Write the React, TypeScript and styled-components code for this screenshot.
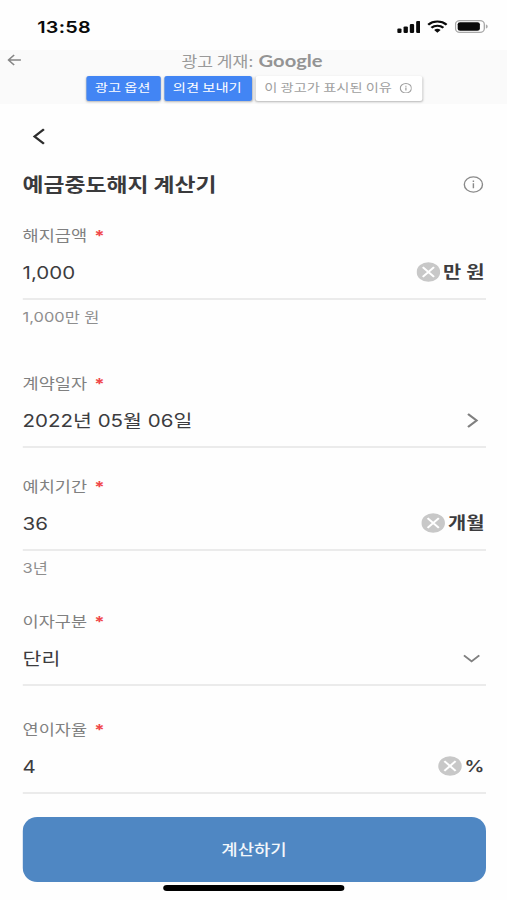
import React from "react";
import styled, { createGlobalStyle } from "styled-components";

const STRETCH = 1.2;

const GlobalStyle = createGlobalStyle`
  * { box-sizing: border-box; }
  html, body { margin: 0; padding: 0; background: #fefefe; overflow: hidden; }
  button { font: inherit; border: 0; padding: 0; background: none; }
`;

const Screen = styled.main`
  width: calc(507px / ${STRETCH});
  height: 900px;
  transform: scaleX(${STRETCH});
  transform-origin: 0 0;
  display: flex;
  flex-direction: column;
  background: #fefefe;
  color: #3c3c3e;
  font-family: "Noto Sans CJK KR", sans-serif;
  white-space: nowrap;
`;

const StatusBar = styled.header`
  height: 50px;
  flex: none;
  display: flex;
  align-items: center;
  justify-content: space-between;
  padding: 3px 15.5px 0 31px;
  color: #0a0a0a;
`;

const Clock = styled.span`
  font: 600 16.5px/20px Inter, sans-serif;
  letter-spacing: 0.2px;
`;

const StatusIcons = styled.div`
  display: flex;
  align-items: center;
  gap: 6px;
  svg { display: block; }
`;

const AdPanel = styled.section`
  height: 54px;
  flex: none;
  display: grid;
  grid-template-columns: 71.7px 1fr;
  background: #fafafa;
  color: #999;
`;

const AdBack = styled.button`
  height: 20px;
  padding-left: 6px;
  display: flex;
  align-items: center;
`;

const AdBody = styled.div`
  display: flex;
  flex-direction: column;
`;

const AdTitle = styled.div`
  height: 26px;
  padding-left: 79.5px;
  display: flex;
  align-items: center;
  gap: 4.5px;
  font-size: 14.3px;
  line-height: 22px;
  padding-bottom: 5px;
`;

const Brand = styled.span`
  font: 700 16.8px/20px Lato, sans-serif;
  color: #949494;
`;

const AdActions = styled.div`
  display: flex;
  gap: 3px;
`;

const AdButton = styled.button<{ $width: number; $plain?: boolean }>`
  width: ${(p) => p.$width}px;
  height: 25px;
  display: flex;
  align-items: center;
  justify-content: center;
  gap: 6px;
  padding: 0 1px 3px 0;
  border-radius: 2px;
  font-size: 11.9px;
  line-height: 20px;
  background: ${(p) => (p.$plain ? "#fff" : "#4285f4")};
  color: ${(p) => (p.$plain ? "#a0a0a0" : "#fff")};
  box-shadow: 0 1px 2px rgba(0, 0, 0, 0.28);
  svg { margin-top: 2px; }
`;

const NavBar = styled.nav`
  height: 64px;
  flex: none;
  padding-left: 27px;
  display: flex;
  align-items: center;
`;

const Content = styled.div`
  flex: 1;
  padding: 0 18px 0 18.8px;
`;

const TitleRow = styled.div`
  height: 55px;
  display: flex;
  align-items: flex-start;
  justify-content: space-between;
  svg { margin: 7.5px 1.5px 0 0; }
`;

const Title = styled.h1`
  margin: 0;
  font-size: 19px;
  line-height: 32px;
  font-weight: 700;
  color: #3a3a3c;
`;

const Field = styled.section<{ $space: number }>`
  height: ${(p) => p.$space}px;
`;

const Label = styled.label`
  display: flex;
  gap: 6px;
  height: 25px;
  font-size: 14.6px;
  line-height: 23px;
  color: #808080;
`;

const Required = styled.span`
  color: #f0484a;
  font: 700 15.5px/28px Inter, sans-serif;
`;

const ValueRow = styled.div`
  height: 52px;
  display: flex;
  align-items: center;
  justify-content: space-between;
  padding-bottom: 2px;
  border-bottom: 2px solid #ebebeb;
`;

const Value = styled.span`
  font-family: Inter, "Noto Sans CJK KR", sans-serif;
  font-size: 17.1px;
  line-height: 28px;
  padding-top: 1px;
`;

const Trailing = styled.span<{ $inset?: number }>`
  display: flex;
  align-items: center;
  gap: 2px;
  padding-right: ${(p) => p.$inset ?? 0.8}px;
`;

const Unit = styled.strong`
  font-family: Inter, "Noto Sans CJK KR", sans-serif;
  font-size: 16.5px;
  line-height: 28px;
  font-weight: 600;
  color: #3c3c3e;
`;

const Helper = styled.p`
  margin: 0;
  font-family: Inter, "Noto Sans CJK KR", sans-serif;
  font-size: 13.7px;
  line-height: 34px;
  color: #8e8e8e;
`;

const Submit = styled.button`
  height: 65px;
  flex: none;
  margin: 0 18px 0 18.8px;
  padding-bottom: 2px;
  border-radius: 12px / 14px;
  background: #4f87c3;
  color: #f3f7fb;
  font-size: 14.8px;
  line-height: 24px;
  font-weight: 500;
`;

const HomeBar = styled.div`
  width: 151px;
  height: 6px;
  flex: none;
  margin: 3px auto 9px;
  border-radius: 3px;
  background: #000;
`;

const Signal = () => (
  <svg width="19.5" height="12" viewBox="0 0 19.5 12" fill="currentColor">
    <rect x="0" y="7.5" width="3.6" height="4.5" rx="1.1" />
    <rect x="5.3" y="5.5" width="3.6" height="6.5" rx="1.1" />
    <rect x="10.5" y="3" width="3.6" height="9" rx="1.1" />
    <rect x="15.8" y="0" width="3.6" height="12" rx="1.1" />
  </svg>
);

const Wifi = () => (
  <svg width="17" height="13" viewBox="0 0 17 13" fill="none" stroke="currentColor" strokeWidth="2.1">
    <path d="M.8 4.7a11 11 0 0 1 15.4 0M3.5 7.7a7.2 7.2 0 0 1 10 0" />
    <path d="M5.8 9.9a4 4 0 0 1 5.4 0L8.5 12.7Z" fill="currentColor" stroke="none" />
  </svg>
);

const Battery = () => (
  <svg width="28" height="13" viewBox="0 0 28 13">
    <rect x=".6" y=".6" width="24" height="11.8" rx="3.6" fill="none" stroke="#a9a9a9" strokeWidth="1.1" />
    <rect x="2.4" y="2.2" width="18.5" height="8.6" rx="2" fill="currentColor" />
    <path d="M25.9 4.5c2 .6 2 3.4 0 4Z" fill="#a9a9a9" />
  </svg>
);

const ArrowLeft = () => (
  <svg width="12" height="12" viewBox="0 0 12 12" fill="none" stroke="#858585" strokeWidth="1.3">
    <path d="M11.4 6H1M5.8 1 1 6l4.8 5" />
  </svg>
);

const Info = ({ size, color }: { size: number; color: string }) => (
  <svg width={size} height={size} viewBox="0 0 17 17" fill="none" stroke={color} strokeWidth={size < 12 ? 1.7 : 1.2}>
    <circle cx="8.5" cy="8.5" r="7.6" />
    <path d="M8.5 7.3v5M8.5 4.4v1.5" />
  </svg>
);

const ChevronLeft = () => (
  <svg width="12" height="17" viewBox="0 0 12 17" fill="none" stroke="#2d2d2d" strokeWidth="2.1">
    <path d="M9.6 1.2 1.8 8.5l7.8 7.3" />
  </svg>
);

const ChevronRight = () => (
  <svg width="10" height="15" viewBox="0 0 10 15" fill="none" stroke="#808080" strokeWidth="1.9">
    <path d="m1 1 7.2 6.5L1 14" />
  </svg>
);

const ChevronDown = () => (
  <svg width="14" height="9" viewBox="0 0 14 9" fill="none" stroke="#808080" strokeWidth="1.7">
    <path d="m.6 1.3 6.4 6 6.4-6" />
  </svg>
);

const Clear = () => (
  <svg width="20" height="20" viewBox="0 0 20 20">
    <circle cx="10" cy="10" r="9.8" fill="#c8c8c8" />
    <path d="m5.3 5.1 9.4 9.8m0-9.8-9.4 9.8" stroke="#fff" strokeWidth="1.8" />
  </svg>
);

interface FieldItem {
  label: string;
  value: string;
  unit?: string;
  icon?: "next" | "open";
  helper?: string;
  space: number;
}

const fields: FieldItem[] = [
  { label: "해지금액", value: "1,000", unit: "만 원", helper: "1,000만 원", space: 148 },
  { label: "계약일자", value: "2022년 05월 06일", icon: "next", space: 103 },
  { label: "예치기간", value: "36", unit: "개월", helper: "3년", space: 135 },
  { label: "이자구분", value: "단리", icon: "open", space: 108 },
  { label: "연이자율", value: "4", unit: "%", space: 77 },
];

export default function App() {
  return (
    <>
      <GlobalStyle />
      <Screen>
        <StatusBar>
          <Clock>13:58</Clock>
          <StatusIcons>
            <Signal />
            <Wifi />
            <Battery />
          </StatusIcons>
        </StatusBar>
        <AdPanel>
          <AdBack><ArrowLeft /></AdBack>
          <AdBody>
            <AdTitle>광고 게재: <Brand>Google</Brand></AdTitle>
            <AdActions>
              <AdButton $width={62}>광고 옵션</AdButton>
              <AdButton $width={73}>의견 보내기</AdButton>
              <AdButton $width={139} $plain>
                이 광고가 표시된 이유 <Info size={10.5} color="#a0a0a0" />
              </AdButton>
            </AdActions>
          </AdBody>
        </AdPanel>
        <NavBar><ChevronLeft /></NavBar>
        <Content>
          <TitleRow>
            <Title>예금중도해지 계산기</Title>
            <Info size={17} color="#8a8a8a" />
          </TitleRow>
          {fields.map((f) => (
            <Field key={f.label} $space={f.space}>
              <Label>{f.label}<Required>*</Required></Label>
              <ValueRow>
                <Value>{f.value}</Value>
                {f.unit && <Trailing><Clear /><Unit>{f.unit}</Unit></Trailing>}
                {f.icon === "next" && <Trailing $inset={5.5}><ChevronRight /></Trailing>}
                {f.icon === "open" && <Trailing $inset={4.5}><ChevronDown /></Trailing>}
              </ValueRow>
              {f.helper && <Helper>{f.helper}</Helper>}
            </Field>
          ))}
        </Content>
        <Submit>계산하기</Submit>
        <HomeBar />
      </Screen>
    </>
  );
}
